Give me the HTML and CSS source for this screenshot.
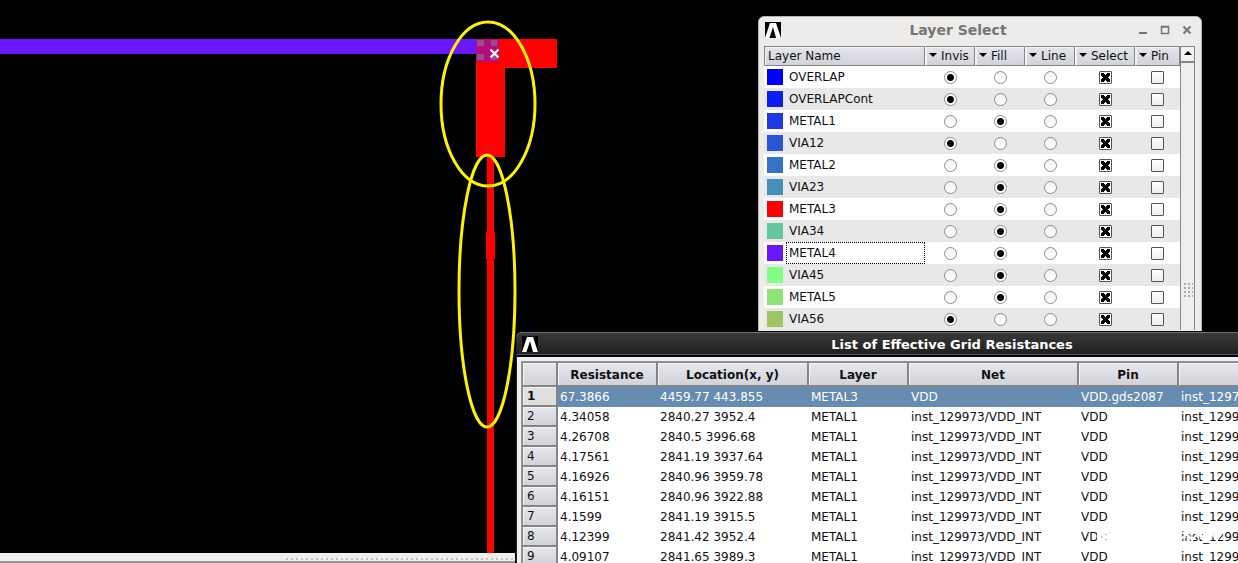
FILE: index.html
```
<!DOCTYPE html>
<html lang="en">
<head>
<meta charset="utf-8">
<title>Layer Select</title>
<link rel="stylesheet" href="styles.css">
</head>
<body>
<main class="desktop">
  <section class="viewer">
    <svg class="drawing" width="600" height="553" aria-hidden="true">
      <rect x="0" y="39" width="476" height="15" fill="#6a16ff"/>
      <g fill="#f00">
        <path d="M476 39H557V68H505V157H476Z"/>
        <rect x="487" y="157" width="7" height="396"/>
        <rect x="486" y="232" width="9" height="27"/>
      </g>
      <rect x="476" y="39" width="23" height="23" fill="#b60c7c"/>
      <g fill="#984c88">
        <rect x="477" y="40" width="7" height="6"/><rect x="491" y="40" width="6" height="6"/>
        <rect x="477" y="54" width="7" height="6"/><rect x="491" y="54" width="6" height="6"/>
      </g>
      <path d="M490.500 49.500L498.500 57.500M498.500 49.500L490.500 57.500" stroke="#fff" stroke-width="2.200"/>
      <g fill="none" stroke="#fff200" stroke-width="3">
        <ellipse cx="488" cy="104" rx="47" ry="82"/>
        <ellipse cx="487" cy="291" rx="28" ry="136"/>
      </g>
    </svg>
    <div class="splitter"><span class="grip"></span></div>
  </section>

  <section class="window layers">
    <header class="titlebar">
      <svg class="logo" viewBox="0 0 16 16" aria-hidden="true"><rect width="16" height="16" fill="#000"/><path d="M0 16L5 1H11L16 16H11L8 5L4.500 16Z" fill="#fff"/></svg>
      <h1 class="title">Layer Select</h1>
      <div class="controls">
        <button aria-label="Minimize"><svg viewBox="0 0 10 10"><path d="M1 8H9" /></svg></button>
        <button aria-label="Maximize"><svg viewBox="0 0 10 10"><path d="M1.500 1.500H8.500V8.500H1.500ZM1 2H9" class="thin"/></svg></button>
        <button aria-label="Close"><svg viewBox="0 0 10 10"><path d="M1.500 1.500L8.500 8.500M8.500 1.500L1.500 8.500"/></svg></button>
      </div>
    </header>
    <div class="layer-body">
      <table class="layer-table">
        <colgroup><col class="c-name"><col class="c-mode"><col class="c-mode"><col class="c-mode"><col class="c-select"><col class="c-pin"></colgroup>
        <thead><tr><th>Layer Name</th><th class="menu">Invis</th><th class="menu">Fill</th><th class="menu">Line</th><th class="menu">Select</th><th class="menu">Pin</th></tr></thead>
        <tbody id="layers"></tbody>
      </table>
      <div class="scrollbar"><button class="up" aria-label="Scroll up"></button><div class="thumb"><span class="thumb-grip"></span></div></div>
    </div>
  </section>

  <section class="window resist">
    <header class="titlebar dark">
      <svg class="logo" viewBox="0 0 16 16" aria-hidden="true"><rect width="16" height="16" fill="#000"/><path d="M0 16L5 1H11L16 16H11L8 5L4.500 16Z" fill="#fff"/></svg>
      <h2 class="title">List of Effective Grid Resistances</h2>
    </header>
    <div class="resist-body">
      <table class="resist-table">
        <colgroup><col class="r-num"><col class="r-100"><col class="r-loc"><col class="r-100"><col class="r-net"><col class="r-100"><col></colgroup>
        <thead><tr><th></th><th>Resistance</th><th>Location(x, y)</th><th>Layer</th><th>Net</th><th>Pin</th><th></th></tr></thead>
        <tbody id="rows"></tbody>
      </table>
    </div>
    <svg class="smudge" width="140" height="32" aria-hidden="true">
      <ellipse cx="8" cy="15" rx="10" ry="8" fill="#fff"/>
      <circle cx="14" cy="21" r="6" fill="#fff"/>
      <path d="M4 16h2M8 14l2-1M8 18l2 1M12 12h1" stroke="#aaa"/>
      <path d="M84 12h42M84 18l6-5 5 6 6-7 6 8 7-8 6 7 5-7M88 8v9M104 9v9M118 9v10" fill="none" stroke="#fff" stroke-width="2"/>
    </svg>
  </section>
</main>
<script src="app.js"></script>
</body>
</html>
```
FILE: styles.css
```
* { box-sizing: border-box; }
body { margin: 0; background: #000; color: #111; font: 12px "DejaVu Sans", sans-serif; }
button { padding: 0; border: 0; background: none; }
h1, h2 { margin: 0; }
.desktop { position: relative; height: 100vh; overflow: hidden; }
.viewer { display: flex; flex-direction: column; justify-content: space-between; height: 100%; }
.drawing { display: block; flex: none; }
.splitter { display: flex; justify-content: flex-end; width: 515px; height: 10px; padding-top: 3px; background: #efefef; border-bottom: 2px solid #999; }
.grip { width: 232px; height: 4px; background: conic-gradient(from 90deg, #c4c4c4 25%, transparent 0) 0 0 / 5px 4px; }

.window { position: absolute; }
.titlebar { display: grid; grid-template-columns: 17px 1fr 60px; align-items: center; }
.logo { width: 16px; height: 16px; }
.title { text-align: center; white-space: nowrap; }

.layers { left: 758px; top: 16px; width: 444px; height: 400px; padding: 0 6px 0 5px; background: #edeceb; border: 1px solid #b5b5b3; border-radius: 6px 6px 0 0; }
.layers .titlebar { height: 29px; padding-bottom: 3px; }
.layers .title { color: #777572; font-size: 14px; }
.layers .logo { margin-left: 1px; }
.controls { display: flex; justify-content: flex-end; gap: 12px; padding-right: 3px; }
.controls button { width: 10px; height: 10px; }
.controls svg { display: block; fill: none; stroke: #777572; stroke-width: 2; }
.controls .thin { stroke-width: 1.500; }
.layer-body { display: flex; background: #fff; }
table { border-collapse: separate; border-spacing: 0; table-layout: fixed; }
th, td { padding: 0; white-space: nowrap; overflow: hidden; }
.layer-table { flex: 1; background: #fff; }
.c-mode { width: 50px; }
.c-select { width: 60px; }
.c-pin { width: 45px; }
.layer-table th { height: 20px; padding-left: 3px; font-weight: 400; text-align: left; background: linear-gradient(#e5e6ec, #d2d3da); border: 1px solid #858585; border-left-color: #f4f4f4; box-shadow: inset 1px 1px #f4f4f4; }
.layer-table th:first-child { border-left-color: #858585; }
.menu::before { content: ""; display: inline-block; margin: 0 4px 3px 0; border: 4px solid transparent; border-top-color: #000; border-bottom: 0; }
.layer-table td { height: 22px; text-align: center; }
.layer-table tr:nth-child(even) td { background: #e8e8e8; }
.name { display: flex; align-items: center; gap: 3px; padding-left: 3px; }
.swatch { flex: none; width: 16px; height: 16px; }
.label { flex: 1; height: 22px; padding-left: 2px; line-height: 21px; border: 1px solid transparent; text-align: left; }
.label.current { border: 1px dotted #000; }
input { appearance: none; display: block; margin: 0 auto; background: linear-gradient(#f2f2f2, #fff); }
input[type="radio"] { width: 13px; height: 13px; border: 1px solid #8d8d8d; border-radius: 50%; }
input[type="radio"]:checked { background: radial-gradient(circle, #000 3px, #fff 4px); }
input[type="checkbox"] { width: 13px; height: 13px; border: 1px solid #555; border-radius: 1px; background: linear-gradient(#fff, #eee); }
input[type="checkbox"]:checked { background: linear-gradient(-45deg, transparent 38%, #000 38% 62%, transparent 62%) center / 9px 9px no-repeat, linear-gradient(45deg, transparent 38%, #000 38% 62%, transparent 62%) center / 9px 9px no-repeat, #fff; }
.scrollbar { display: flex; flex-direction: column; flex: none; width: 15px; background: #eee; border: 1px solid #858585; border-width: 0 1px; }
.up { height: 16px; border: 1px solid #858585; border-width: 1px 0; background: #f2f2f2; }
.up::before { content: ""; display: block; width: 0; margin: 0 auto 2px; border: 4px solid transparent; border-bottom-color: #000; border-top: 0; }
.thumb { flex: 1; border-top: 1px solid #858585; }
.thumb-grip { display: block; width: 11px; height: 18px; margin: 218px auto 0; background: conic-gradient(from 90deg, #aaa 25%, transparent 0) 0 0 / 4px 4px; }

.resist { left: 516px; top: 331px; width: 871px; background: #efefef; border-top: 1px solid #000; border-left: 1px solid #222; border-radius: 6px 0 0 0; overflow: hidden; }
.dark { grid-template-columns: 55px 1fr 60px; height: 25px; padding-left: 5px; background: linear-gradient(#393939, #292929 60%, #1e1e1e); border-top: 1px solid #6b6b6b; border-bottom: 2px solid #000; box-shadow: inset 0 -1px #45546c; }
.dark .title { color: #fff; font-size: 13px; }
.resist-body { margin: 4px 0 0 4px; border: 1px solid #999; border-right: 0; background: #fff; }
.resist-table { width: 100%; border-left: 1px solid #858585; }
.r-num { width: 35px; }
.r-100 { width: 100px; }
.r-loc { width: 151px; }
.r-net { width: 170px; }
.resist-table th { height: 20px; background: linear-gradient(#e6e7ec, #d2d3d9); border: solid #858585; border-width: 0 2px 2px 0; box-shadow: inset 1px 1px #f5f5f5; }
.resist-table thead th { height: 25px; padding-top: 1px; border-top-width: 1px; }
.resist-table tbody th { padding-left: 4px; font-weight: 400; text-align: left; }
.resist-table td { height: 20px; padding-left: 2px; background: #fff; }
.resist-table .picked th { font-weight: 700; background: #dfdfdf; }
.resist-table .picked td { color: #fff; background: #668cb2; }
.smudge { position: absolute; left: 580px; top: 189px; }
```
FILE: app.js
```
const layers = [
  ["OVERLAP", "#0000ff", 0], ["OVERLAPCont", "#0d1df2", 0], ["METAL1", "#1b39e4", 1],
  ["VIA12", "#2856d7", 0], ["METAL2", "#3672c9", 1], ["VIA23", "#448fbb", 1],
  ["METAL3", "#ff0000", 1], ["VIA34", "#65c79d", 1], ["METAL4", "#6a16ff", 1],
  ["VIA45", "#80ff80", 1], ["METAL5", "#8fe373", 1], ["VIA56", "#9dc765", 0]
];
const modes = ["Invis", "Fill", "Line"];
document.getElementById("layers").innerHTML = layers.map(([name, color, mode]) =>
  `<tr><td><div class="name"><span class="swatch" style="background:${color}"></span><span class="label${name === "METAL4" ? " current" : ""}">${name}</span></div></td>` +
  modes.map((m, i) => `<td><input type="radio" name="${name}" aria-label="${name} ${m}"${i === mode ? " checked" : ""}></td>`).join("") +
  `<td><input type="checkbox" aria-label="${name} Select" checked></td><td><input type="checkbox" aria-label="${name} Pin"></td></tr>`
).join("");

const inst = "inst_129973/VDD_INT";
const rows = [
  ["67.3866", "4459.77 443.855", "METAL3", "VDD", "VDD.gds2087", "inst_1297"],
  ["4.34058", "2840.27 3952.4"], ["4.26708", "2840.5 3996.68"], ["4.17561", "2841.19 3937.64"],
  ["4.16926", "2840.96 3959.78"], ["4.16151", "2840.96 3922.88"], ["4.1599", "2841.19 3915.5"],
  ["4.12399", "2841.42 3952.4"], ["4.09107", "2841.65 3989.3"]
].map(r => r.length > 2 ? r : [...r, "METAL1", inst, "VDD", "inst_1299"]);
document.getElementById("rows").innerHTML = rows.map((r, i) =>
  `<tr${i ? "" : ' class="picked"'}><th scope="row">${i + 1}</th>${r.map(c => `<td>${c}</td>`).join("")}</tr>`
).join("");
```
